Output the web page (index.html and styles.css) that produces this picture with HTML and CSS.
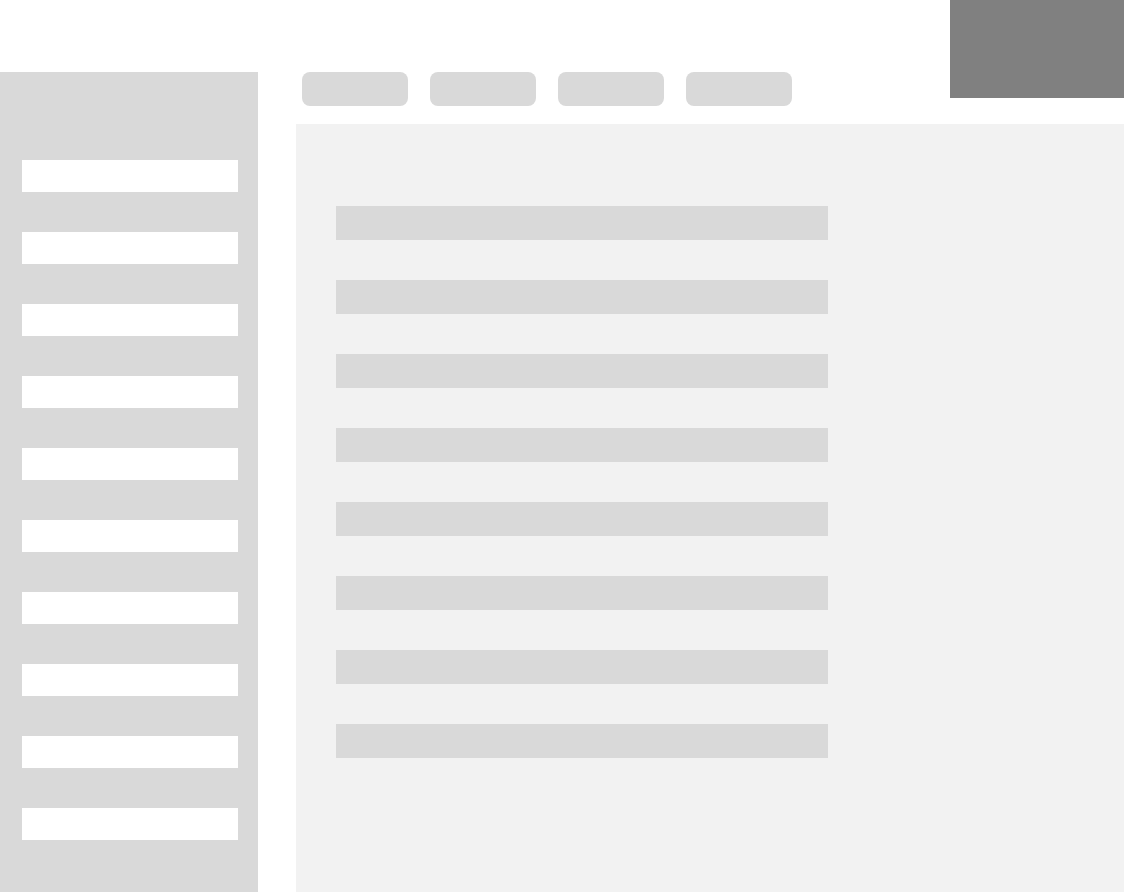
FILE: index.html
```html
<!DOCTYPE html>
<html lang="en">
<head>
<meta charset="utf-8">
<title>Wireframe</title>
<link rel="stylesheet" href="styles.css">
</head>
<body>
<div class="page">
  <div class="corner-box"></div>
  <div class="layout">
    <aside class="sidebar">
      <div class="side-item"></div>
      <div class="side-item"></div>
      <div class="side-item"></div>
      <div class="side-item"></div>
      <div class="side-item"></div>
      <div class="side-item"></div>
      <div class="side-item"></div>
      <div class="side-item"></div>
      <div class="side-item"></div>
      <div class="side-item"></div>
    </aside>
    <main class="main">
      <nav class="tabs">
        <div class="tab"></div>
        <div class="tab"></div>
        <div class="tab"></div>
        <div class="tab"></div>
      </nav>
      <section class="panel">
        <div class="row"></div>
        <div class="row"></div>
        <div class="row"></div>
        <div class="row"></div>
        <div class="row"></div>
        <div class="row"></div>
        <div class="row"></div>
        <div class="row"></div>
      </section>
    </main>
  </div>
</div>
</body>
</html>
```
FILE: styles.css
```css
html, body {
  margin: 0;
  padding: 0;
  height: 892px;
  overflow: hidden;
  background: #ffffff;
  font-family: "Liberation Sans", Arial, sans-serif;
}

.page {
  position: relative;
  width: 1124px;
  height: 892px;
  box-sizing: border-box;
  padding-top: 72px;
}

.corner-box {
  position: absolute;
  top: 0;
  right: 0;
  width: 174px;
  height: 98px;
  background: #808080;
}

.layout {
  display: flex;
  gap: 38px;
  height: 820px;
}

.sidebar {
  width: 258px;
  flex: 0 0 258px;
  background: #d9d9d9;
  box-sizing: border-box;
  padding: 88px 20px 0 22px;
  display: flex;
  flex-direction: column;
  gap: 40px;
}

.side-item {
  width: 216px;
  height: 32px;
  background: #ffffff;
}

.main {
  flex: 1;
  display: flex;
  flex-direction: column;
  gap: 18px;
}

.tabs {
  display: flex;
  gap: 22px;
  padding-left: 6px;
  height: 34px;
}

.tab {
  width: 106px;
  height: 34px;
  border-radius: 8px;
  background: #d9d9d9;
}

.panel {
  flex: 1;
  background: #f2f2f2;
  box-sizing: border-box;
  padding: 82px 0 0 40px;
  display: flex;
  flex-direction: column;
  gap: 40px;
}

.row {
  width: 492px;
  height: 34px;
  background: #d9d9d9;
}
```
